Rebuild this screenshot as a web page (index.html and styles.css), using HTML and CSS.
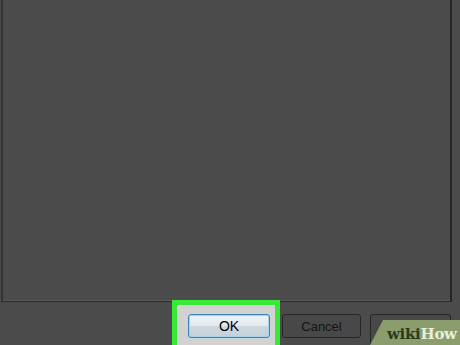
FILE: index.html
```html
<!DOCTYPE html>
<html>
<head>
<meta charset="utf-8">
<link rel="stylesheet" href="styles.css">
</head>
<body>
<div class="window">
  <div class="panel"></div>
  <div class="footer">
    <div class="highlight">
      <button class="btn btn-ok">OK</button>
    </div>
    <button class="btn btn-dark btn-cancel">Cancel</button>
    <button class="btn btn-dark btn-apply">Apply</button>
  </div>
  <div class="watermark"><span class="wiki">wiki</span><span class="how">How</span></div>
</div>
</body>
</html>
```
FILE: styles.css
```css
html, body {
  margin: 0;
  padding: 0;
}
body {
  width: 460px;
  height: 345px;
  overflow: hidden;
  background: #4b4b4b;
  font-family: "Liberation Sans", Arial, sans-serif;
}
.window {
  position: relative;
  width: 460px;
  height: 345px;
  overflow: hidden;
}
.panel {
  box-sizing: border-box;
  margin-left: 1px;
  width: 451px;
  height: 302px;
  border-left: 2px solid #333;
  border-right: 2px solid #262626;
  border-bottom: 1px solid #2a2a2a;
  box-shadow: inset 0 -1px 0 #595959;
}
.footer {
  display: flex;
  align-items: flex-start;
  margin-top: -2px;
}
.highlight {
  box-sizing: border-box;
  margin-left: 172px;
  width: 108px;
  height: 50px;
  border: 5px solid #3ae83a;
  background: #d2d2d2;
  padding: 9px 5px 0 11px;
}
.btn {
  box-sizing: border-box;
  height: 24px;
  border-radius: 3px;
  font-family: "Liberation Sans", Arial, sans-serif;
  font-size: 13px;
  padding: 0;
  margin: 0;
}
.btn-ok {
  width: 82px;
  font-size: 14px;
  border: 1px solid #3a86b8;
  background: linear-gradient(#eef3f7, #e2e8ed 50%, #cfd8df 51%, #c5d0d8);
  color: #000;
  box-shadow: inset 0 0 0 1px #9fd3f0;
}
.btn-dark {
  border: 1px solid #262626;
  background: #484848;
  color: #141414;
  margin-top: 14px;
}
.btn-cancel {
  width: 79px;
  margin-left: 2px;
}
.btn-apply {
  width: 81px;
  margin-left: 9px;
  height: 34px;
  padding-bottom: 10px;
}
.watermark {
  position: absolute;
  left: 370px;
  top: 320px;
  width: 90px;
  height: 25px;
  background: #8c9d6d;
  clip-path: polygon(13px 0, 100% 0, 100% 100%, 0 100%);
  font-family: "DejaVu Serif", "Liberation Serif", serif;
  font-weight: bold;
  font-size: 15px;
  line-height: 25px;
  padding-left: 17px;
  padding-top: 2px;
  box-sizing: border-box;
  white-space: nowrap;
  letter-spacing: -0.3px;
}
.wiki {
  color: #2c3a1c;
}
.how {
  color: #e8eedc;
}
```
